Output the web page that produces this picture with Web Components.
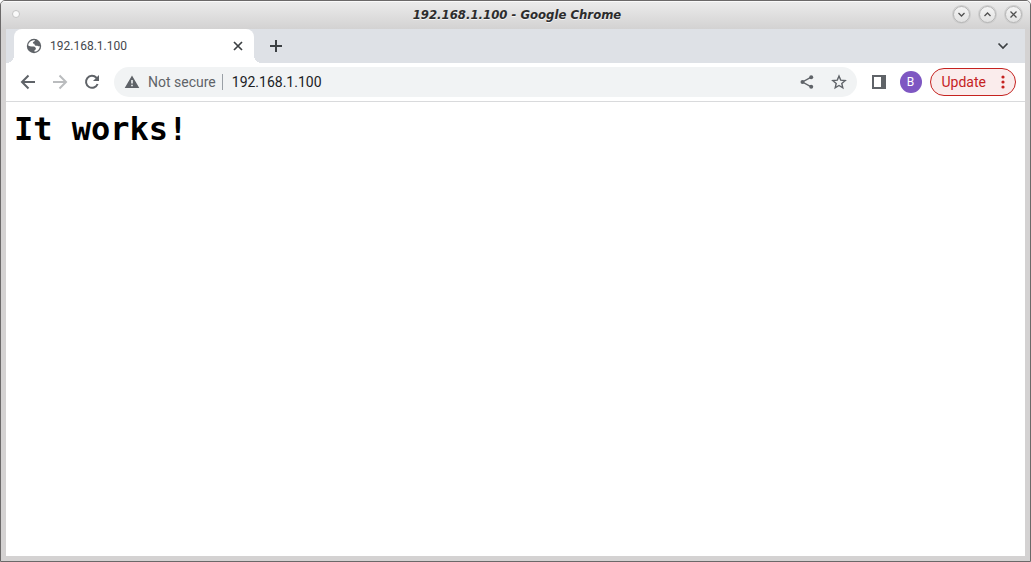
<!DOCTYPE html>
<html lang="en">
<head>
<meta charset="utf-8">
<title>192.168.1.100</title>
<style>
html, body { height: 100%; margin: 0; background: #fff; }
</style>
</head>
<body>
<desktop-window>
  <title-bar slot="title">192.168.1.100 - Google Chrome</title-bar>
  <tab-strip><browser-tab>192.168.1.100</browser-tab></tab-strip>
  <browser-toolbar url="192.168.1.100"></browser-toolbar>
  <page-view>It works!</page-view>
</desktop-window>
<script>
const define = (name, html, setup) => customElements.define(name, class extends HTMLElement {
  constructor() {
    super();
    this.attachShadow({ mode: 'open' }).innerHTML = `<style>
      * { box-sizing: border-box; }
      button { appearance: none; border: 0; padding: 0; margin: 0; background: none; font: inherit; color: inherit;
        display: flex; align-items: center; justify-content: center; flex: none; }
      svg { display: block; flex: none; }
    </style>` + html;
    if (setup) setup(this);
  }
});

define('desktop-window', `
<style>
:host { display: flex; flex-direction: column; box-sizing: border-box; min-height: 100vh;
  border: 1px solid #6b6969; border-radius: 5px 5px 0 0; background: #d4d2d2; overflow: hidden; }
.client { flex: 1; display: flex; flex-direction: column; margin: 0 5px 5px; background: #fff; }
</style>
<slot name="title"></slot>
<div class="client"><slot></slot></div>`);

define('title-bar', `
<style>
:host { display: grid; grid-template-columns: 1fr auto 1fr; align-items: center; height: 28px; padding: 0 8px 3px 11px;
  background: linear-gradient(#ebebeb, #d3d2d2); border-top: 1px solid #fafafa; box-sizing: border-box;
  font: italic bold 13px/16px "DejaVu Sans Condensed", "DejaVu Sans", sans-serif; color: #2c2c2c; text-shadow: 0 1px #f4f4f4; }
span { padding-top: 2px; }
.dot { width: 8px; height: 8px; border-radius: 50%; background: #fafafa; border: 1px solid #c4c4c4; }
.controls { display: flex; justify-content: flex-end; gap: 9px; }
.controls button { width: 17px; height: 17px; border-radius: 50%; border: 1px solid #b4b4b4;
  background: linear-gradient(#f4f4f4, #e2e2e2); box-shadow: 0 0 0 1px #cdcdcd; }
</style>
<button class="dot" aria-label="Window menu"></button>
<span><slot></slot></span>
<div class="controls">
<button aria-label="Minimize"><svg width="9" height="9" viewBox="0 0 9 9" fill="none" stroke="#505050" stroke-width="1.300"><path d="M1.500 3l3 3 3-3"/></svg></button>
<button aria-label="Maximize"><svg width="9" height="9" viewBox="0 0 9 9" fill="none" stroke="#505050" stroke-width="1.300"><path d="M1.500 6l3-3 3 3"/></svg></button>
<button aria-label="Close"><svg width="9" height="9" viewBox="0 0 9 9" fill="none" stroke="#505050" stroke-width="1.300"><path d="M1.500 1.500l6 6M7.500 1.500l-6 6"/></svg></button>
</div>`);

define('tab-strip', `
<style>
:host { display: flex; align-items: center; height: 34px; padding: 0 14px 0 8px; background: #dee1e6; box-sizing: border-box; color: #3c4043; }
.new { margin-left: 14px; width: 16px; height: 16px; }
.search { margin-left: auto; width: 16px; height: 16px; }
</style>
<slot></slot>
<button class="new" aria-label="New tab"><svg width="16" height="16" fill="none" stroke="currentColor" stroke-width="2"><path d="M8 2v12M2 8h12"/></svg></button>
<button class="search" aria-label="Search tabs"><svg width="16" height="16" fill="none" stroke="currentColor" stroke-width="1.700"><path d="M3.500 5.500l4.500 4.500 4.500-4.500"/></svg></button>`);

define('browser-tab', `
<style>
:host { position: relative; display: flex; align-items: center; gap: 8px; width: 240px; height: 34px; padding: 0 8px 0 12px;
  box-sizing: border-box; background: #fff; border-radius: 8px 8px 0 0; font: 12px/16px Roboto, sans-serif; color: #45484d; }
:host::before, :host::after { content: ""; position: absolute; bottom: 0; width: 8px; height: 8px; }
:host::before { right: 100%; background: radial-gradient(circle at 0 0, transparent 8px, #fff 8px); }
:host::after { left: 100%; background: radial-gradient(circle at 100% 0, transparent 8px, #fff 8px); }
.name { flex: 1; }
button { width: 16px; height: 16px; }
</style>
<svg width="16" height="16" viewBox="0 0 16 16"><circle cx="8" cy="8" r="7.200" fill="#5f6368"/><path fill="#fff" d="M9.200 2.200C8.800 3.700 7.200 3.300 6.900 4.500c-.2.900.6 1.200 1.500 1.200.1 1.500.8 2.100 2.300 2 1 0 1.300.6 2.100.6l1-.1c-.1 2.800-2.300 5.300-5.300 5.500l.1-1.800c1.300-.2 1.500-1 1.100-2-.5-1-1.600-1.400-3.400-1.300-1.400.1-2.800-.2-4.100-1.100C2.400 4.500 5 1.800 9.200 2.200z"/></svg>
<span class="name"><slot></slot></span>
<button aria-label="Close tab"><svg width="16" height="16" fill="none" stroke="#3c4043" stroke-width="1.700"><path d="M4 4l8 8M12 4l-8 8"/></svg></button>`);

define('browser-toolbar', `
<style>
:host { display: flex; align-items: center; height: 39px; padding: 0 9px 0 12px; box-sizing: border-box;
  border-bottom: 1px solid #d9dadc; background: #fff; font: 14px/20px Roboto, sans-serif; color: #5f6368; }
nav { display: flex; gap: 12px; margin-right: 12px; }
nav button { width: 20px; height: 20px; }
.box { flex: 1; min-width: 0; display: flex; align-items: center; height: 30px; padding: 0 10px; border-radius: 15px; background: #f1f3f4; }
.secure { gap: 8px; }
.rule { width: 1px; height: 16px; margin: 0 9px 0 6px; background: #9aa0a6; }
input { flex: 1; min-width: 0; border: 0; padding: 0; outline: 0; background: none; font: inherit; color: #202124; }
.actions { display: flex; gap: 16px; }
.side { margin: 0 13px 0 14px; }
.avatar { width: 22px; height: 22px; border-radius: 50%; background: #7e57c2; color: #fff; font-size: 12px; line-height: 16px; }
.update { height: 28px; margin-left: 8px; padding: 0 10px 0 11px; gap: 15px; border: 1px solid #c5221f; border-radius: 14px;
  background: #faecec; color: #c5221f; }
</style>
<nav>
<button aria-label="Back"><svg width="20" height="20" fill="none" stroke="#5f6368" stroke-width="2"><path d="M17 10H4.500M10.500 3.500L4 10l6.500 6.500"/></svg></button>
<button aria-label="Forward"><svg width="20" height="20" fill="none" stroke="#babcbe" stroke-width="2"><path d="M3 10h12.500M9.500 3.500L16 10l-6.500 6.500"/></svg></button>
<button aria-label="Reload"><svg width="20" height="20"><path d="M15.600 12A6 6 0 1 1 14.400 5.700L16 7.300" fill="none" stroke="#5f6368" stroke-width="2"/><path d="M17 3v6h-6z" fill="#5f6368"/></svg></button>
</nav>
<div class="box">
<button class="secure"><svg width="16" height="16"><path fill="#5f6368" fill-rule="evenodd" d="M8 1.500L15.300 14H.7zM7.200 6v3.500h1.600V6zM7.200 10.700v1.600h1.600v-1.600z"/></svg><span>Not secure</span></button>
<span class="rule"></span>
<input type="text" aria-label="Address">
<div class="actions">
<button aria-label="Share"><svg width="16" height="16" fill="#5f6368"><path d="M12.200 3.200L3.500 8l8.700 4.800" fill="none" stroke="#5f6368" stroke-width="1.400"/><circle cx="12.200" cy="3.200" r="2"/><circle cx="3.500" cy="8" r="2"/><circle cx="12.200" cy="12.800" r="2"/></svg></button>
<button aria-label="Bookmark"><svg width="16" height="16" fill="none" stroke="#5f6368" stroke-width="1.400"><path d="M8 2l1.700 4.100 4.500.4-3.400 2.900 1 4.400L8 11.500l-3.800 2.300 1-4.400-3.400-2.900 4.500-.4z"/></svg></button>
</div>
</div>
<button class="side" aria-label="Side panel"><svg width="16" height="16"><path fill="#5f6368" fill-rule="evenodd" d="M1 1h14v14H1zM3 3v10h7V3z"/></svg></button>
<button class="avatar" aria-label="Profile">B</button>
<button class="update"><span>Update</span><svg width="4" height="14" fill="#c5221f"><circle cx="2" cy="2" r="1.600"/><circle cx="2" cy="7" r="1.600"/><circle cx="2" cy="12" r="1.600"/></svg></button>`,
el => { el.shadowRoot.querySelector('input').value = el.getAttribute('url') || ''; });

define('page-view', `
<style>
:host { display: block; flex: 1; padding: 8px; }
h1 { margin: 0; font: bold 32px/38px "DejaVu Sans Mono", monospace; color: #000; }
</style>
<h1><slot></slot></h1>`);
</script>
</body>
</html>
